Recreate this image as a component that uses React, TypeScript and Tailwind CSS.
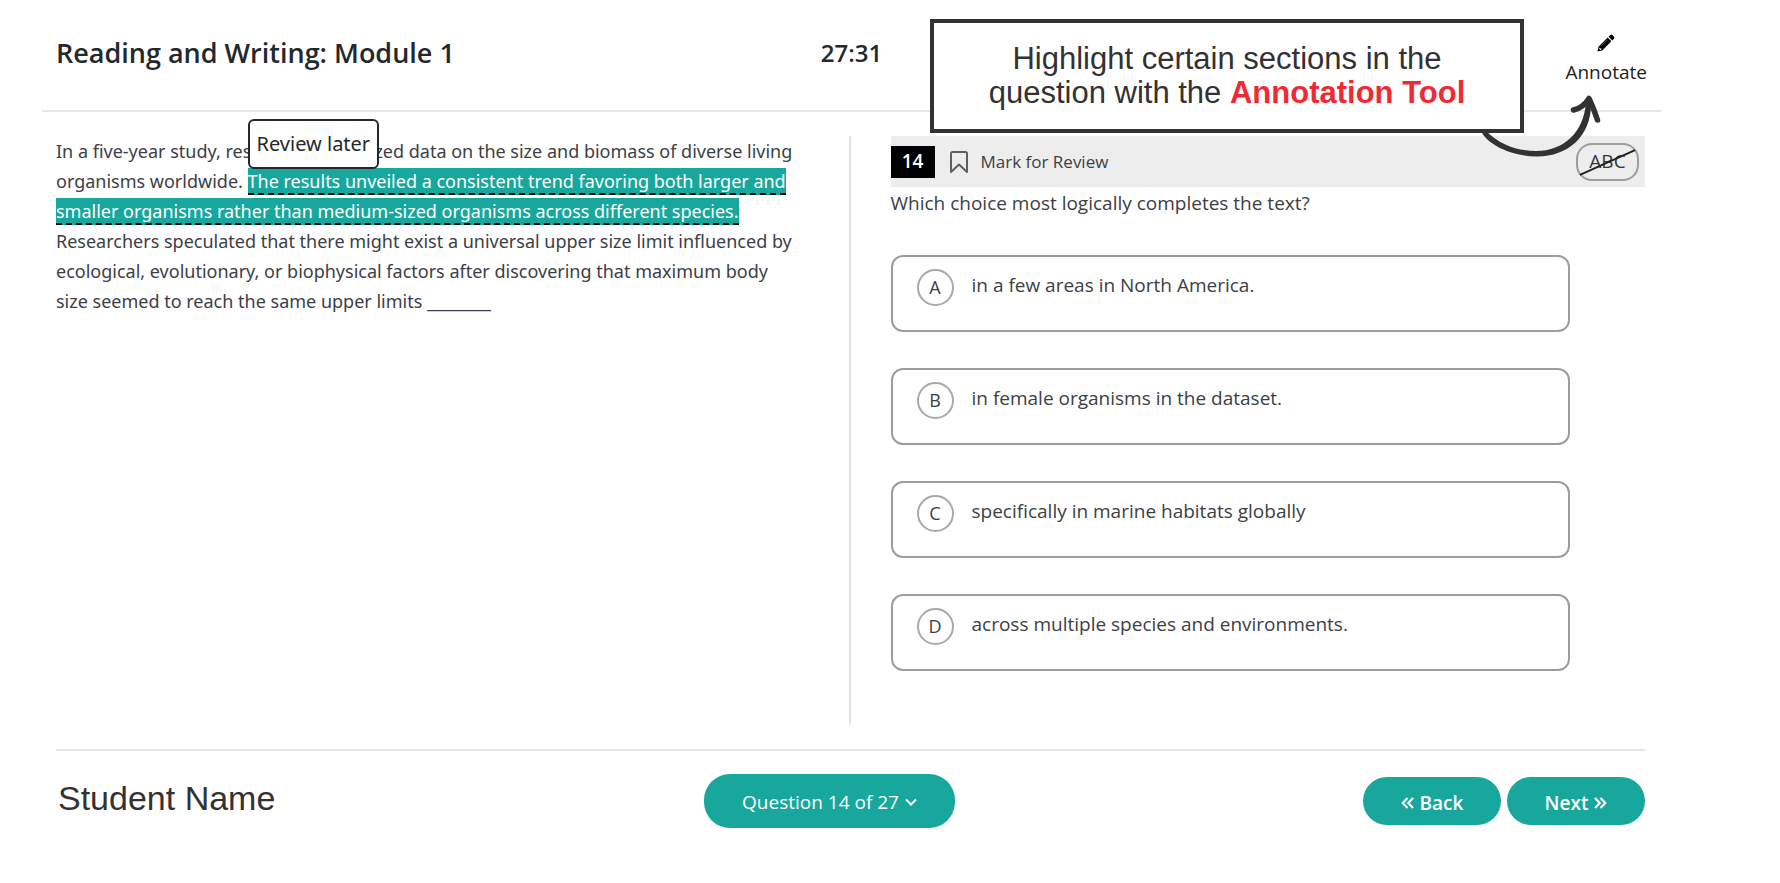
import React from 'react';

const options = [
  { letter: 'A', text: 'in a few areas in North America.' },
  { letter: 'B', text: 'in female organisms in the dataset.' },
  { letter: 'C', text: 'specifically in marine habitats globally' },
  { letter: 'D', text: 'across multiple species and environments.' },
];

const PencilIcon = () => (
  <svg width="18" height="18" viewBox="0 0 18 18" fill="#000">
    <path d="M0.500 17.500L1.500 12.800L10.700 3.600L14.400 7.300L5.200 16.500Z" />
    <path d="M11.600 2.700L13.300 1Q14.300 0.200 15.300 1L17 2.700Q17.800 3.700 17 4.700L15.300 6.400Z" />
    <path d="M2.700 13.400L4.700 15.400L3.300 15.900L2.100 14.700Z" fill="#fff" />
    <path d="M4 12.200L10.600 5.600" stroke="#8a8a8a" strokeWidth="0.700" />
  </svg>
);

const BookmarkIcon = () => (
  <svg width="20" height="24" viewBox="0 0 20 24" fill="none" stroke="#5b5f66" strokeWidth="2" strokeLinejoin="round">
    <path d="M2 22V3.500Q2 2 3.500 2H16.500Q18 2 18 3.500V22L10 14.500Z" />
  </svg>
);

const ChevronDownIcon = () => (
  <svg width="12" height="8" viewBox="0 0 12 8" fill="none" stroke="currentColor" strokeWidth="2">
    <path d="M1 1.500L6 6.500L11 1.500" />
  </svg>
);

const DoubleAngleIcon = ({ flip = false }: { flip?: boolean }) => (
  <svg
    width="13"
    height="12"
    viewBox="0 0 13 12"
    fill="none"
    stroke="currentColor"
    strokeWidth="2.200"
    className={flip ? 'rotate-180' : ''}
  >
    <path d="M6.500 1L1.800 6L6.500 11M12 1L7.300 6L12 11" />
  </svg>
);

const Callout = () => (
  <div className="absolute right-[137px] top-[19px] w-[594px] border-4 border-[#333132] bg-white pt-[19px] pb-[19px] text-center font-['Liberation_Sans',sans-serif] text-[31px] leading-[34px] text-[#333132]">
    Highlight certain sections in the
    <br />
    question with the <strong className="font-bold text-[#ee2a35]">Annotation Tool</strong>
    <svg
      width="130"
      height="66"
      viewBox="0 0 130 66"
      fill="none"
      stroke="#333132"
      className="absolute -right-[88px] top-[71px]"
    >
      <path
        stroke="none"
        fill="#333132"
        d="M8 37C22 51 40 57 58 57C86 57 106 38 108 8L113 8C114 42 90 63 58 62.500C32 62 9 50 3 37Z"
      />
      <path strokeWidth="5.500" strokeLinecap="round" strokeLinejoin="round" d="M95.500 16Q105 14 111 4.500Q116 15 119.500 26" />
    </svg>
  </div>
);

const Header = () => (
  <header className="relative">
    <div className="grid h-[112px] grid-cols-3 border-b-2 border-[#e4e6ee] px-[14px] pt-[34px] text-[#24282d]">
      <h1 className="text-[27px] font-semibold leading-[38px] whitespace-nowrap">Reading and Writing: Module 1</h1>
      <div className="text-center text-[24px] font-semibold leading-[38px]">27:31</div>
      <div className="flex items-start justify-end">
        <button type="button" className="flex flex-col items-center gap-[8px] text-[19px] leading-[24px] text-[#1b1e22]">
          <PencilIcon />
          Annotate
        </button>
      </div>
    </div>
    <Callout />
  </header>
);

const Passage = () => (
  <section className="border-r-2 border-[#e0e3ec] pr-12 font-['Noto_Sans',sans-serif]">
    <p className="text-[18px] leading-[30px] text-[#3c4046]">
      In a five-year study, researchers analyzed data on the size and biomass of diverse living organisms worldwide.{' '}
      <span className="relative">
        <button
          type="button"
          className="absolute bottom-full left-0 h-[50px] rounded-md border-2 border-[#24282d] bg-white px-[7px] text-[20px] whitespace-nowrap text-[#24282d]"
        >
          Review later
        </button>
      </span>
      <mark className="border-b-2 border-dashed border-black bg-[#17a79c] pt-px text-white">
        The results unveiled a consistent trend favoring both larger and smaller organisms rather than medium-sized
        organisms across different species.
      </mark>{' '}
      Researchers speculated that there might exist a universal upper size limit influenced by ecological, evolutionary,
      or biophysical factors after discovering that maximum body size seemed to reach the same upper limits ________
    </p>
  </section>
);

const Question = () => (
  <section className="pl-10">
    <div className="flex h-[51px] items-center bg-[#ededed]">
      <span className="flex h-8 w-11 items-center justify-center bg-black text-[19px] font-semibold text-white">14</span>
      <button type="button" className="ml-[14px] flex items-center gap-[12px] text-[17px] font-medium text-[#3c4046]">
        <BookmarkIcon />
        Mark for Review
      </button>
      <button
        type="button"
        aria-label="Cross out answers"
        className="relative mr-[6px] ml-auto h-[38px] w-[63px] rounded-2xl border-2 border-[#9c9d9f] text-[19px] text-[#33373d]"
      >
        ABC
        <svg viewBox="0 0 60 34" fill="none" stroke="#222" strokeWidth="2" className="absolute inset-0 h-full w-full">
          <path d="M2 30L58 5" />
        </svg>
      </button>
    </div>
    <fieldset>
      <legend className="text-[19px] leading-[32px] text-[#3c4046]">
        Which choice most logically completes the text?
      </legend>
      <div className="mt-9 mr-[75px] flex flex-col gap-9">
        {options.map((option) => (
          <label
            key={option.letter}
            className="flex h-[77px] items-start gap-[18px] rounded-xl border-2 border-[#9c9d9f] px-6 pt-3 text-[#3c4046]"
          >
            <input type="radio" name="answer" value={option.letter} className="sr-only" />
            <span className="flex h-[37px] w-[37px] items-center justify-center rounded-full border-2 border-[#a8a9ab] text-[18px]">
              {option.letter}
            </span>
            <span className="text-[19px] leading-[32px]">{option.text}</span>
          </label>
        ))}
      </div>
    </fieldset>
  </section>
);

const Footer = () => (
  <footer className="mr-4 ml-[14px] flex items-start justify-between border-t-2 border-[#e4e6ee] pt-[23px]">
    <div className="w-60 pt-[4px] pl-[2px] font-['Liberation_Sans',sans-serif] text-[34px] leading-[40px] text-[#333132]">
      Student Name
    </div>
    <button
      type="button"
      className="flex h-[54px] w-[251px] items-center justify-center gap-[6px] rounded-[26px] bg-[#17a79c] pt-[2px] text-[19px] font-medium text-white"
    >
      Question 14 of 27
      <ChevronDownIcon />
    </button>
    <div className="flex justify-end gap-[6px] pt-[3px] text-[19px] font-semibold text-white">
      <button
        type="button"
        className="flex h-12 w-[138px] items-center justify-center gap-[6px] rounded-full bg-[#17a79c] pt-[4px]"
      >
        <DoubleAngleIcon />
        Back
      </button>
      <button
        type="button"
        className="flex h-12 w-[138px] items-center justify-center gap-[6px] rounded-full bg-[#17a79c] pt-[4px]"
      >
        Next
        <DoubleAngleIcon flip />
      </button>
    </div>
  </footer>
);

const App = () => {
  return (
    <div className="min-h-screen bg-white pl-[42px] pr-[119px] font-['Open_Sans',sans-serif]">
      <Header />
      <main className="mt-[24px] mb-[25px] grid min-h-[588px] grid-cols-2 pl-[14px] pr-4">
        <Passage />
        <Question />
      </main>
      <Footer />
    </div>
  );
};

export default App;
